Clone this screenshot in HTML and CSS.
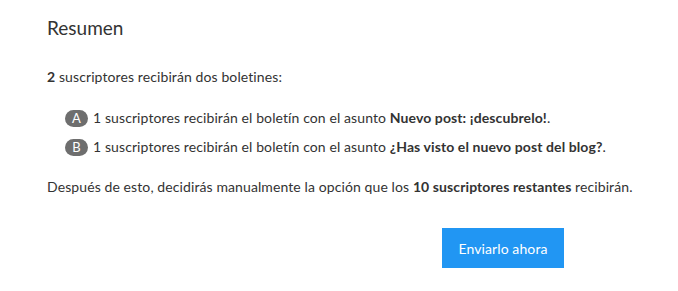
FILE: index.html
```html
<!DOCTYPE html>
<html lang="es">
<head>
<meta charset="utf-8">
<link rel="stylesheet" href="styles.css">
</head>
<body>
<div class="panel">
  <h2 class="title">Resumen</h2>
  <p class="intro"><b>2</b> suscriptores recibirán dos boletines:</p>
  <ul class="variants">
    <li><span class="badge">A</span>1 suscriptores recibirán el boletín con el asunto <b>Nuevo post: ¡descubrelo!</b>.</li>
    <li><span class="badge">B</span>1 suscriptores recibirán el boletín con el asunto <b>¿Has visto el nuevo post del blog?</b>.</li>
  </ul>
  <p class="outro">Después de esto, decidirás manualmente la opción que los <b>10 suscriptores restantes</b> recibirán.</p>
  <div class="actions">
    <button class="send">Enviarlo ahora</button>
  </div>
</div>
</body>
</html>
```
FILE: styles.css
```css
html, body { margin: 0; padding: 0; background: #fff; }
body { font-family: Lato, "Open Sans", sans-serif; color: #333; font-size: 14px; letter-spacing: 0.1px; }
.panel { padding: 17px 20px 0 47px; }
.title { margin: 0; font-size: 19px; font-weight: 400; line-height: 22px; color: #333; letter-spacing: 0; }
.intro { margin: 29px 0 0; line-height: 18px; }
.variants { list-style: none; margin: 23px 0 0; padding: 0 0 0 18px; }
.variants li { display: flex; align-items: center; line-height: 18px; height: 18px; margin-bottom: 11px; white-space: pre; }
.badge { display: inline-flex; align-items: center; justify-content: center; width: 23px; height: 17px; border-radius: 9px; background: #6e6e6e; color: #fff; font-size: 13px; margin-right: 5px; letter-spacing: 0; }
.variants b, .intro b, .outro b { font-weight: 700; }
.outro { margin: 22px 0 0; line-height: 18px; white-space: nowrap; }
.actions { display: flex; justify-content: flex-end; padding-right: 94px; margin-top: 32px; }
.send { background: #2196f3; color: #fff; border: 0; width: 122px; height: 40px; font-family: inherit; font-size: 14px; letter-spacing: 0.1px; padding: 0; }
```
